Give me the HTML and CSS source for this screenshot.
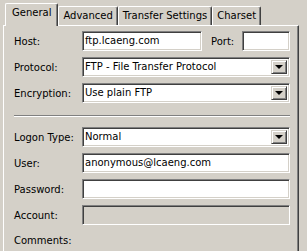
FILE: index.html
```html
<!DOCTYPE html>
<html lang="en">
<head>
    <meta charset="UTF-8">
    <title>Site Manager - General</title>
    <link rel="stylesheet" href="styles.css">
</head>
<body>
    <div class="tabs">
        <div class="tab active">General</div>
        <div class="tab">Advanced</div>
        <div class="tab">Transfer Settings</div>
        <div class="tab">Charset</div>
    </div>

    <div class="panel">
        <!-- Server section -->
        <div class="row host-row">
            <span class="label">Host:</span>
            <div class="field">ftp.lcaeng.com</div>
            <span class="label port-label">Port:</span>
            <div class="field"></div>
        </div>
        <div class="row">
            <span class="label">Protocol:</span>
            <div class="field select">FTP - File Transfer Protocol<span class="arrow"></span></div>
        </div>
        <div class="row">
            <span class="label">Encryption:</span>
            <div class="field select">Use plain FTP<span class="arrow"></span></div>
        </div>

        <div class="separator"></div>

        <!-- Logon section -->
        <div class="row">
            <span class="label">Logon Type:</span>
            <div class="field select">Normal<span class="arrow"></span></div>
        </div>
        <div class="row">
            <span class="label">User:</span>
            <div class="field">anonymous@lcaeng.com</div>
        </div>
        <div class="row">
            <span class="label">Password:</span>
            <div class="field"></div>
        </div>
        <div class="row">
            <span class="label">Account:</span>
            <div class="field disabled"></div>
        </div>
        <div class="comments">Comments:</div>
    </div>
</body>
</html>
```

FILE: styles.css
```css
body {
    margin: 0;
    background: #d4d0c8;
    font-family: "DejaVu Sans", sans-serif;
    font-size: 10px;
    color: #000;
    overflow: hidden;
}

.tabs {
    display: flex;
    align-items: flex-end;
    padding: 3px 0 0 5px;
    height: 22px;
}

.tab {
    height: 19px;
    box-sizing: border-box;
    padding: 3px 4px 0 4px;
    border-top: 1px solid #fff;
    border-left: 1px solid #fff;
    border-right: 1px solid #404040;
    box-shadow: inset -1px 0 0 #808080;
    border-radius: 2px 2px 0 0;
    white-space: nowrap;
}

.tab.active {
    position: relative;
    z-index: 1;
    height: 23px;
    margin-bottom: -1px;
    padding: 3px 6px 0 6px;
    background: #d4d0c8;
}

.panel {
    margin-left: 3px;
    width: 296px;
    height: 300px;
    box-sizing: border-box;
    border-top: 1px solid #fff;
    border-left: 1px solid #fff;
    border-right: 1px solid #404040;
    box-shadow: inset -1px 0 0 #808080;
    padding: 5px 8px 0 10px;
}

.row {
    display: grid;
    grid-template-columns: 68px 1fr;
    align-items: center;
    height: 20px;
    margin-bottom: 6px;
}

.host-row {
    grid-template-columns: 68px 120px 40px 1fr;
}

.port-label {
    padding-left: 9px;
}

.field {
    position: relative;
    height: 20px;
    box-sizing: border-box;
    background: #fff;
    border-top: 1px solid #808080;
    border-left: 1px solid #808080;
    border-right: 1px solid #fff;
    border-bottom: 1px solid #fff;
    box-shadow: inset 1px 1px 0 #404040, inset -1px -1px 0 #d4d0c8;
    padding: 3px 0 0 2px;
    white-space: nowrap;
    overflow: hidden;
}

.field.disabled {
    background: #d4d0c8;
}

.arrow {
    position: absolute;
    top: 2px;
    right: 2px;
    width: 16px;
    height: 14px;
    box-sizing: border-box;
    background: #d4d0c8;
    border-top: 1px solid #d4d0c8;
    border-left: 1px solid #d4d0c8;
    border-right: 1px solid #404040;
    border-bottom: 1px solid #404040;
    box-shadow: inset 1px 1px 0 #fff, inset -1px -1px 0 #808080;
}

.arrow::after {
    content: "";
    position: absolute;
    left: 3px;
    top: 4px;
    border-left: 4px solid transparent;
    border-right: 4px solid transparent;
    border-top: 4px solid #000;
}

.separator {
    height: 0;
    border-top: 1px solid #808080;
    border-bottom: 1px solid #fff;
    margin: 12px 0 10px 0;
}

.comments {
    margin-top: 10px;
}
```
